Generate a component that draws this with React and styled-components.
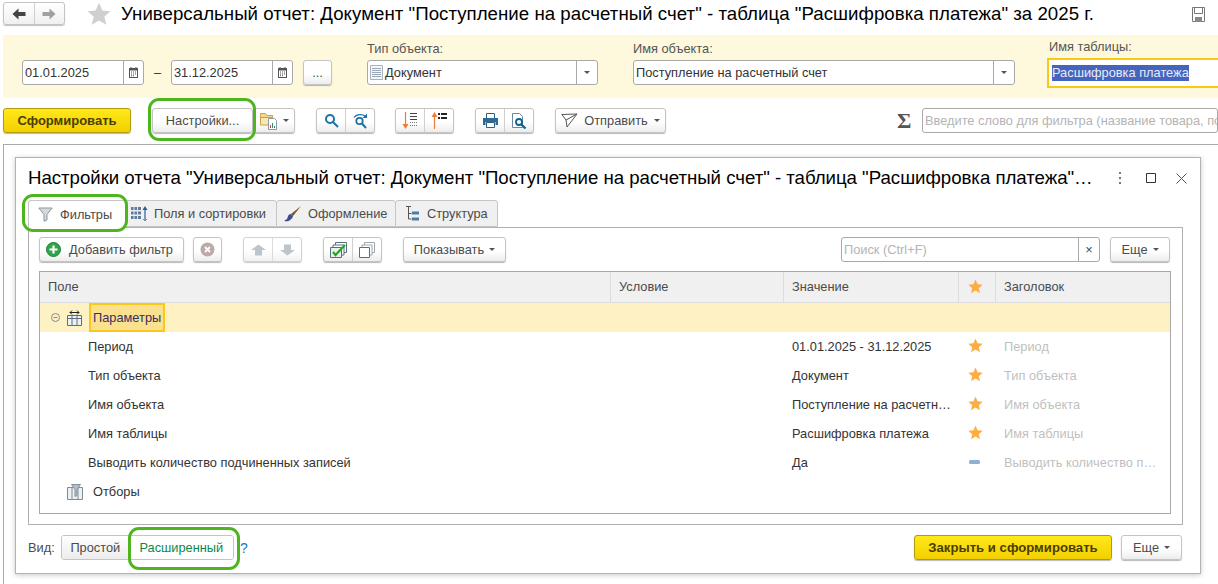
import React from "react";
import styled, { createGlobalStyle } from "styled-components";

const Global = createGlobalStyle`
  html, body { margin: 0; padding: 0; background: #fff; }
  body { font-family: "Liberation Sans", Arial, sans-serif; font-size: 12.8px; color: #4b4b4b; }
  * { box-sizing: border-box; }
`;

const Page = styled.div`
  position: relative; width: 1218px; height: 584px; overflow: hidden; background: #fff;
`;
const TitleBar = styled.header`
  display: flex; align-items: center; height: 35px; padding: 0 12px 7px 3px;
`;
const NavGroup = styled.div`
  display: flex; width: 62px; height: 23px; margin-bottom: 1px; border: 1px solid #c4c4c4; border-radius: 3px;
  background: linear-gradient(#fff, #f0f0f0); box-shadow: 0 1px 1px rgba(0,0,0,.25);
`;
const NavCell = styled.div`
  flex: 1; display: flex; align-items: center; justify-content: center;
  & + & { border-left: 1px solid #cfcfcf; }
`;
const PageTitle = styled.h1`
  flex: 1; margin: 0 0 0 10px; font-size: 18.67px; font-weight: 400; letter-spacing: .03px; color: #000; white-space: nowrap; line-height: 24px;
`;
const StarBox = styled.div` margin-left: 22px; width: 24px; height: 24px; display:flex; `;

const FilterPanel = styled.section`
  display: flex; align-items: flex-end; height: 63px; margin-left: 3px; padding: 0 0 13px 19px; background: #fef8dc;
`;
const Field = styled.div`
  display: flex; flex-direction: column; width: ${p => p.$w}px; margin-left: ${p => p.$ml || 0}px; flex: none;
`;
const FieldLabel = styled.label`
  height: 18px; margin-left: ${p => p.$ml || 0}px; font-size: 12.8px; line-height: 14px; color: #555;
`;
const InputBox = styled.div`
  display: flex; align-items: center; height: 25px; background: #fff; border: 1px solid #a9a9a9; border-radius: 3px; overflow: hidden;
  width: ${p => p.$w ? p.$w + "px" : "auto"}; flex: none; margin-left: ${p => p.$ml || 0}px;
`;
const InputText = styled.span`
  flex: 1; min-width: 0; padding-left: 2px; font-size: 12.8px; color: #333; white-space: nowrap; overflow: hidden;
  display: flex; align-items: center; gap: 2px;
`;
const Placeholder = styled(InputText)` color: #b4b4b4; `;
const Addon = styled.span`
  flex: none; width: ${p => p.$w || 20}px; height: 100%; border-left: 1px solid #a9a9a9; display: flex; align-items: center; justify-content: center;
`;
const Dash = styled.span` width: 27px; height: 25px; line-height: 25px; text-align: center; color: #333; font-size: 12.8px; flex: none; `;
const Focused = styled.div`
  display: flex; align-items: center; height: 30px; margin: 0 -3px -3px 0; padding-left: 3px; background: #fff; border: 2px solid #fbc815;
`;
const Selected = styled.span` background: #4464bd; color: #e9ecf7; font-size: 12.8px; line-height: 16px; white-space: nowrap; `;

const Btn = styled.button`
  display: inline-flex; align-items: center; justify-content: center; gap: ${p => p.$gap ?? 5}px; flex: none;
  width: ${p => p.$w}px; height: ${p => p.$h || 25}px; margin-left: ${p => p.$ml || 0}px; padding: 0 ${p => p.$pr || 0}px 0 0;
  font: 12.8px "Liberation Sans", Arial, sans-serif; color: #4b4b4b;
  background: linear-gradient(#fff, #fff 55%, #ededed); border: 1px solid #c4c4c4; border-radius: 3px;
  box-shadow: 0 1px 1px rgba(0,0,0,.28);
`;
const PrimaryBtn = styled(Btn)`
  font-weight: 700; font-size: ${p => p.$fs || 13}px; color: #4a3e00; border-color: #b39a12;
  background: linear-gradient(#ffe81a, #f3d000);
`;
const Group = styled.div`
  display: flex; flex: none; height: 25px; width: ${p => p.$w}px; margin-left: ${p => p.$ml || 0}px; border: 1px solid #c4c4c4; border-radius: 3px;
  background: linear-gradient(#fff, #fff 55%, #ededed); box-shadow: 0 1px 1px rgba(0,0,0,.28);
  opacity: ${p => p.$dim ? .75 : 1};
`;
const GroupCell = styled.div`
  flex: 1; display: flex; align-items: center; justify-content: center; gap: 5px;
  & + & { border-left: 1px solid #cfcfcf; }
`;
const Toolbar = styled.div`
  display: flex; align-items: center; height: 46px; margin-left: 3px; padding-bottom: 1px;
`;
const Sigma = styled.span`
  margin-left: auto; width: 25px; flex: none; font: 700 22px "Liberation Serif", serif; color: #555; line-height: 20px;
`;
const Frame = styled.main`
  margin-left: 3px; height: 441px; padding: 12px 0 0 11px; border-left: 1px solid #aaa; border-top: 1px solid #aaa;
`;
const Modal = styled.section`
  width: 1186px; height: 417px; padding: 0 18px 0 12px; background: #fff; border: 1px solid #b3b3b3; box-shadow: 0 1px 5px rgba(0,0,0,.22);
`;
const ModalHead = styled.div`
  display: flex; align-items: center; height: 42px; padding-bottom: 2px; margin-right: -15px;
`;
const ModalTitle = styled.h2`
  flex: 1; margin: 0; min-width: 0; font-size: 18.67px; font-weight: 400; letter-spacing: -.03px; color: #000; white-space: nowrap;
`;
const WinBtn = styled.span`
  width: 31px; flex: none; display: flex; align-items: center; justify-content: center;
`;
const TabRow = styled.div`
  display: flex; height: 27px; position: relative; z-index: 1;
`;
const Tab = styled.div`
  display: flex; align-items: center; gap: ${p => p.$gap || 8}px; height: ${p => p.$active ? 28 : 27}px; width: ${p => p.$w}px; padding-left: ${p => p.$pl || 8}px;
  background: ${p => p.$active ? "#fff" : "#f0f0f0"}; border: 1px solid #c6c6c6; border-bottom: ${p => p.$active ? "0" : "1px solid #c6c6c6"};
  border-radius: 3px 3px 0 0; font-size: 12.8px; color: #4b4b4b; margin-left: -1px; flex: none;
  &:first-child { margin-left: 0; }
`;
const TabPanel = styled.div`
  height: 298px; width: 1155px; padding: 9px 10px; border: 1px solid #b0b0b0;
`;
const PanelTools = styled.div` display: flex; align-items: center; height: 25px; padding-right: 2px; `;
const Table = styled.div`
  margin-top: 9px; width: 1132px; height: 243px; border: 1px solid #a8a8a8;
`;
const COLS = "570px 173px 175px 37px 1fr";
const HeadRow = styled.div`
  display: grid; grid-template-columns: ${COLS}; height: 31px; background: #f0f0f0; border-bottom: 1px solid #dcdcdc;
`;
const HeadCell = styled.div`
  display: flex; align-items: center; justify-content: ${p => p.$center ? "center" : "flex-start"};
  padding: ${p => p.$center ? "0 3px 2px 0" : "0 0 2px 8px"}; font-size: 12.8px; color: #4b4b4b;
  & + & { border-left: 1px solid #dcdcdc; }
`;
const Row = styled.div`
  display: grid; grid-template-columns: ${COLS}; height: 29px; align-items: center; font-size: 12.8px; color: #333;
  background: ${p => p.$hl ? "#fef1c3" : "transparent"};
`;
const TreeCell = styled.div`
  display: flex; align-items: center; height: 100%; padding-left: ${p => p.$indent || 0}px; white-space: nowrap;
`;
const Cell = styled.div`
  padding-left: ${p => p.$pl ?? 9}px; white-space: nowrap; color: ${p => p.$muted ? "#bfbfbf" : "#333"};
`;
const CenterCell = styled.div` display: flex; justify-content: center; padding: 0 3px 2px 0; `;
const Current = styled.span`
  display: flex; align-items: center; height: 29px; padding: 0 2px; margin-left: 7px; background: #fbe08f; border: 2px solid #f9c81b; color: #35305e;
`;
const CollapseGap = styled.span` width: 7px; flex: none; `;
const TreeLabel = styled.span` margin-left: 10px; color: #333; `;
const Foot = styled.footer` display: flex; align-items: center; height: 45px; `;
const FootLabel = styled.span` width: 33px; flex: none; font-size: 12.8px; color: #4b4b4b; `;
const Segment = styled.div`
  display: flex; flex: none; height: 25px; width: 173px; border: 1px solid #c4c4c4; border-radius: 3px; overflow: hidden;
`;
const SegItem = styled.div`
  display: flex; align-items: center; justify-content: center; width: ${p => p.$w}px; font-size: 12.8px;
  color: ${p => p.$active ? "#0a8a4a" : "#4b4b4b"};
  background: ${p => p.$active ? "#fff" : "linear-gradient(#fff, #ececec)"};
  border-left: ${p => p.$active ? "1px solid #c4c4c4" : 0};
`;
const Help = styled.span` margin-left: 6px; color: #1478c4; font-size: 14px; font-weight: 400; `;
const Spacer = styled.div` flex: 1; `;
const Caret = styled.span`
  display: inline-block; width: 0; height: 0; flex: none; border-left: 3px solid transparent; border-right: 3px solid transparent; border-top: 3px solid #555;
`;
const Ring = styled.div`
  position: absolute; left: ${p => p.$x}px; top: ${p => p.$y}px; width: ${p => p.$w}px; height: ${p => p.$h}px;
  border: 3px solid #4fb51f; border-radius: 11px; pointer-events: none; z-index: 5;
`;

const Star = ({ size = 15, color = "#fbae45" }) => (
  <svg width={size} height={size} viewBox="0 0 24 24"><path fill={color} d="M12 .8l3.3 7.6 8.2.8-6.2 5.4 1.9 8.1L12 18.4l-7.2 4.3 1.9-8.1L.5 9.2l8.2-.8z" /></svg>
);
const ArrowL = ({ c = "#444" }) => (
  <svg width="14" height="12" viewBox="0 0 14 12"><path fill={c} d="M6.500 0.500 L0.500 6 L6.500 11.500 V8 H13.500 V4 H6.500z" /></svg>
);
const ArrowR = ({ c = "#a0a0a0" }) => (
  <svg width="14" height="12" viewBox="0 0 14 12"><path fill={c} d="M7.500 0.500 L13.500 6 L7.500 11.500 V8 H0.500 V4 H7.500z" /></svg>
);
const Floppy = () => (
  <svg width="15" height="15" viewBox="0 0 15 15" fill="none" stroke="#777"><path d="M1.500 .5h12v14h-12z" /><path d="M3.500 .5v6h8v-6" /><path fill="#888" stroke="none" d="M4 10h7v5H4z" /></svg>
);
const Calendar = () => (
  <svg width="11" height="11" viewBox="0 0 11 11"><path fill="#555" d="M1 1h1.500V0h1v1h4V0h1v1H10v10H1z" /><path fill="#fff" d="M2 3.500h7V10H2z" /><path fill="#555" d="M3 4.500h1v1H3zM5 4.500h1v1H5zM7 4.500h1v1H7zM3 6.500h1v1H3zM5 6.500h1v1H5zM7 6.500h1v1H7zM3 8.200h1v1H3zM5 8.200h1v1H5z" /></svg>
);
const DocIcon = () => (
  <svg width="13" height="15" viewBox="0 0 13 15"><path fill="#f4f6f9" stroke="#a8b2be" d="M.5.500h12v14H.5z" /><path stroke="#9aa7b5" d="M2 3.500h9M2 5.500h9M2 7.500h9M2 9.500h9M2 11.500h9" /></svg>
);
const FolderChart = () => (
  <svg width="18" height="18" viewBox="0 0 18 18"><path fill="#f5d98a" stroke="#c9a24a" d="M.5 3.500V1.500h5l1 2h6v9H.5z" /><path fill="#fbe7b0" stroke="#c9a24a" d="M.5 5.500h12V13H.5z" /><path fill="#fff" stroke="#8e9aa6" d="M8.500 6.500h6l2 2v9h-8z" /><path fill="#c84a3a" d="M10 13h1v3h-1z" /><path fill="#3c8f4a" d="M12 11h1v5h-1z" /><path fill="#3a6ea5" d="M14 14h1v2h-1z" /></svg>
);
const Search = () => (
  <svg width="15" height="15" viewBox="0 0 15 15" fill="none" stroke="#1b72a8" strokeWidth="2"><circle cx="6" cy="6" r="4" /><path d="M9 9l5 5" /></svg>
);
const SearchRe = () => (
  <svg width="17" height="16" viewBox="0 0 17 16" fill="none" stroke="#1b72a8"><path strokeWidth="1.300" d="M2 4.500C4 1.500 10 .5 13 3" /><path fill="#1b72a8" stroke="none" d="M15 .5v4.500h-4.500z" /><circle strokeWidth="1.800" cx="7.500" cy="8" r="3.200" /><path strokeWidth="2" d="M10 10.500l4 4.500" /></svg>
);
const SortDown = () => (
  <svg width="17" height="17" viewBox="0 0 17 17"><path stroke="#ee7b35" strokeWidth="1.200" d="M3.500 0v14" /><path fill="#ee7b35" d="M.5 12h6l-3 5z" /><path stroke="#444" d="M8 1.500h7M8 4.500h7M8 7.500h7" /><path stroke="#777" strokeDasharray="1 1" d="M8 10.500h7M8 13.500h7" /></svg>
);
const SortUp = () => (
  <svg width="17" height="17" viewBox="0 0 17 17"><path stroke="#ee7b35" strokeWidth="1.200" d="M3.500 3v14" /><path fill="#ee7b35" d="M.5 5h6l-3-5z" /><path fill="#222" d="M7 1h2v2H7zM7 5h2v2H7z" /><path stroke="#222" d="M10 1.500h6M10 2.500h6M10 5.500h6M10 6.500h6" /></svg>
);
const Printer = () => (
  <svg width="15" height="15" viewBox="0 0 15 15"><path fill="#fff" stroke="#2a5f86" d="M3.500.5h8v5h-8z" /><path fill="#2a6a96" d="M0 5h15v7h-2.500V9h-10v3H0z" /><path fill="#fff" stroke="#2a5f86" d="M3.500 9.500h8v5h-8z" /></svg>
);
const PrintPreview = () => (
  <svg width="16" height="16" viewBox="0 0 16 16"><path fill="#fff" stroke="#6c8aa3" d="M1.500.5h7l3 3v11h-10z" /><circle cx="8" cy="9" r="3" fill="#fff" stroke="#12608f" strokeWidth="1.800" /><path stroke="#12608f" strokeWidth="2.200" d="M10 11l4.500 4.500" /></svg>
);
const PaperPlane = () => (
  <svg width="17" height="15" viewBox="0 0 17 15" fill="none" stroke="#555"><path d="M.800 1.500L16 1 6 14 5 7zM5 7L16 1" /></svg>
);
const Funnel = () => (
  <svg width="15" height="15" viewBox="0 0 15 15"><path fill="#d4d8dc" stroke="#8f979e" d="M.800 1h13.400L9 7.500V13L6 14.200V7.500z" /></svg>
);
const FieldsIcon = () => (
  <svg width="17" height="16" viewBox="0 0 17 16"><path fill="#5c7c99" d="M0 1h10v3H0zM0 5.500h10v3H0zM0 10h10v3H0z" /><path stroke="#dfe7ee" d="M3 1v12M6.500 1v12" /><path stroke="#27609a" strokeWidth="1.200" d="M14 2v12" /><path fill="#27609a" d="M11.500 4L14 0l2.500 4z" /><path fill="#888" d="M12 13h1v1h-1zM15 13h1v1h-1zM13 14h2v1h-2z" /></svg>
);
const Brush = () => (
  <svg width="18" height="16" viewBox="0 0 18 16"><path fill="#7a5428" d="M17 0L7 8l2 2z" /><path fill="#3e4d8c" d="M7 8c-3 0-3 3-4 5l-3 2c4 1 8-1 9-5z" /></svg>
);
const TreeIcon = () => (
  <svg width="14" height="15" viewBox="0 0 14 15"><path fill="none" stroke="#555" d="M3.500 1v12h3M3.500 7.500h3" /><path fill="none" stroke="#555" d="M1 .5h5" /><path fill="#4c7ea8" d="M7 5.500h7v3H7zM7 11.500h7v3H7z" /></svg>
);
const PlusCircle = () => (
  <svg width="15" height="15" viewBox="0 0 15 15"><circle cx="7.500" cy="7.500" r="7" fill="#2fa64a" stroke="#1e8137" /><path stroke="#fff" strokeWidth="2.200" d="M7.500 3.500v8M3.500 7.500h8" /></svg>
);
const XCircle = () => (
  <svg width="15" height="15" viewBox="0 0 15 15"><circle cx="7.500" cy="7.500" r="7" fill="#bda9a5" /><path stroke="#fff" strokeWidth="1.800" d="M5 5l5 5M10 5l-5 5" /></svg>
);
const ArrowUp = () => (
  <svg width="15" height="12" viewBox="0 0 15 12"><path fill="#a6b2ba" d="M7.500 .5L15 6h-4v5.500H4V6H0z" /></svg>
);
const ArrowDown = () => (
  <svg width="15" height="12" viewBox="0 0 15 12"><path fill="#a6b2ba" d="M7.500 11.500L15 6h-4V.5H4V6H0z" /></svg>
);
const CheckAll = () => (
  <svg width="17" height="16" viewBox="0 0 17 16" fill="#fff" stroke="#56707f"><path d="M5.500.5h11v10h-11z" /><path d="M3 3h11v10H3z" /><path fill="#e9f2e6" d="M.5 5.500h11v10H.5z" /><path fill="none" stroke="#29a02e" strokeWidth="2.200" d="M3 10l2.500 3L15 3" /></svg>
);
const UncheckAll = () => (
  <svg width="16" height="16" viewBox="0 0 16 16" fill="#fff" stroke="#56707f"><path stroke="#9aa7af" d="M5.500.5h10v10h-10z" /><path stroke="#9aa7af" d="M3 3h10v10H3z" /><path d="M.5 5.500h10v10H.5z" /></svg>
);
const Collapse = () => (
  <svg width="9" height="9" viewBox="0 0 9 9" fill="none" stroke="#8a8a8a"><circle cx="4.500" cy="4.500" r="4" /><path d="M2.500 4.500h4" /></svg>
);
const ParamsIcon = () => (
  <svg width="15" height="16" viewBox="0 0 15 16" fill="none" stroke="#5c6f80"><path fill="#eef1f4" d="M.5 5.500h14v10H.5z" /><path d="M5 5.500v10M10 5.500v10M.5 8.500h14" /><path stroke="#222" d="M3 2.500h9M3 2.500l2-2M3 2.500l2 2M12 2.500l-2-2M12 2.500l-2 2" /></svg>
);
const FiltersIcon = () => (
  <svg width="16" height="16" viewBox="0 0 16 16" fill="none" stroke="#7b8c9a"><path fill="#eef1f4" d="M.5 3.500h15v12H.5z" /><path d="M5 3.500v12M11 3.500v12" /><path fill="#b5bec6" stroke="#87929c" d="M4.500.5h9l-3.500 5v6l-2 1v-7z" /></svg>
);
const Dots = () => (
  <svg width="4" height="12" viewBox="0 0 4 12" fill="#777"><path d="M1 0h2v2H1zM1 5h2v2H1zM1 10h2v2H1z" /></svg>
);
const Maximize = () => (
  <svg width="10" height="10" viewBox="0 0 10 10" fill="none" stroke="#333"><path d="M.5.500h9v9h-9z" /></svg>
);
const CloseX = () => (
  <svg width="11" height="11" viewBox="0 0 11 11" fill="none" stroke="#555"><path d="M.5.500l10 10M10.500.5l-10 10" /></svg>
);
const Minus = () => (
  <svg width="14" height="14" viewBox="0 0 14 14"><rect x="1" y="5" width="11" height="4" rx="1.500" fill="#8fb0d6" /></svg>
);

const rows = [
  ["Период", "01.01.2025 - 31.12.2025", true, "Период"],
  ["Тип объекта", "Документ", true, "Тип объекта"],
  ["Имя объекта", "Поступление на расчетн…", true, "Имя объекта"],
  ["Имя таблицы", "Расшифровка платежа", true, "Имя таблицы"],
  ["Выводить количество подчиненных записей", "Да", false, "Выводить количество п…"],
];

export default function App() {
  return (
    <Page>
      <Global />
      <TitleBar>
        <NavGroup>
          <NavCell><ArrowL /></NavCell>
          <NavCell><ArrowR /></NavCell>
        </NavGroup>
        <StarBox><Star size={24} color="#cfcfcf" /></StarBox>
        <PageTitle>Универсальный отчет: Документ "Поступление на расчетный счет" - таблица "Расшифровка платежа" за 2025 г.</PageTitle>
        <Floppy />
      </TitleBar>

      <FilterPanel>
        <InputBox $w={122}><InputText>01.01.2025</InputText><Addon><Calendar /></Addon></InputBox>
        <Dash>–</Dash>
        <InputBox $w={122}><InputText>31.12.2025</InputText><Addon><Calendar /></Addon></InputBox>
        <Btn $w={29} $ml={10}>...</Btn>
        <Field $w={231} $ml={35}>
          <FieldLabel>Тип объекта:</FieldLabel>
          <InputBox><InputText><DocIcon />Документ</InputText><Addon $w={21}><Caret /></Addon></InputBox>
        </Field>
        <Field $w={382} $ml={35}>
          <FieldLabel>Имя объекта:</FieldLabel>
          <InputBox><InputText>Поступление на расчетный счет</InputText><Addon $w={21}><Caret /></Addon></InputBox>
        </Field>
        <Field $w={171} $ml={32}>
          <FieldLabel $ml={2}>Имя таблицы:</FieldLabel>
          <Focused><Selected>Расшифровка платежа</Selected></Focused>
        </Field>
      </FilterPanel>

      <Toolbar>
        <PrimaryBtn $w={128}>Сформировать</PrimaryBtn>
        <Btn $w={101} $ml={21}>Настройки...</Btn>
        <Btn $w={42} $gap={5}><FolderChart /><Caret /></Btn>
        <Group $w={59} $ml={21}><GroupCell><Search /></GroupCell><GroupCell><SearchRe /></GroupCell></Group>
        <Group $w={59} $ml={20}><GroupCell><SortDown /></GroupCell><GroupCell><SortUp /></GroupCell></Group>
        <Group $w={59} $ml={21}><GroupCell><Printer /></GroupCell><GroupCell><PrintPreview /></GroupCell></Group>
        <Btn $w={111} $ml={21} $gap={6}><PaperPlane />Отправить<Caret /></Btn>
        <Sigma>Σ</Sigma>
        <InputBox $w={296}><Placeholder>Введите слово для фильтра (название товара, по</Placeholder></InputBox>
      </Toolbar>

      <Frame>
        <Modal>
          <ModalHead>
            <ModalTitle>Настройки отчета "Универсальный отчет: Документ "Поступление на расчетный счет" - таблица "Расшифровка платежа"…</ModalTitle>
            <WinBtn><Dots /></WinBtn>
            <WinBtn><Maximize /></WinBtn>
            <WinBtn><CloseX /></WinBtn>
          </ModalHead>
          <TabRow>
            <Tab $active $w={98} $pl={9} $gap={7}><Funnel />Фильтры</Tab>
            <Tab $w={152} $pl={5} $gap={6}><FieldsIcon />Поля и сортировки</Tab>
            <Tab $w={120} $pl={7} $gap={6}><Brush />Оформление</Tab>
            <Tab $w={103} $pl={9}><TreeIcon />Структура</Tab>
          </TabRow>
          <TabPanel>
            <PanelTools>
              <Btn $w={145} $gap={8} $pr={4}><PlusCircle />Добавить фильтр</Btn>
              <Btn $w={29} $ml={9}><XCircle /></Btn>
              <Group $w={59} $ml={21} $dim><GroupCell><ArrowUp /></GroupCell><GroupCell><ArrowDown /></GroupCell></Group>
              <Group $w={59} $ml={21}><GroupCell><CheckAll /></GroupCell><GroupCell><UncheckAll /></GroupCell></Group>
              <Btn $w={103} $ml={21}>Показывать<Caret /></Btn>
              <Spacer />
              <InputBox $w={259}><Placeholder>Поиск (Ctrl+F)</Placeholder><Addon $w={21}>×</Addon></InputBox>
              <Btn $w={60} $ml={10}>Еще<Caret /></Btn>
            </PanelTools>
            <Table>
              <HeadRow>
                <HeadCell>Поле</HeadCell>
                <HeadCell>Условие</HeadCell>
                <HeadCell>Значение</HeadCell>
                <HeadCell $center><Star /></HeadCell>
                <HeadCell>Заголовок</HeadCell>
              </HeadRow>
              <Row $hl>
                <TreeCell $indent={11}>
                  <Collapse />
                  <CollapseGap />
                  <ParamsIcon />
                  <Current>Параметры</Current>
                </TreeCell>
              </Row>
              {rows.map(r => (
                <Row key={r[0]}>
                  <Cell $pl={48}>{r[0]}</Cell>
                  <span />
                  <Cell>{r[1]}</Cell>
                  <CenterCell>{r[2] ? <Star /> : <Minus />}</CenterCell>
                  <Cell $muted>{r[3]}</Cell>
                </Row>
              ))}
              <Row>
                <TreeCell $indent={27}><FiltersIcon /><TreeLabel>Отборы</TreeLabel></TreeCell>
              </Row>
            </Table>
          </TabPanel>
          <Foot>
            <FootLabel>Вид:</FootLabel>
            <Segment>
              <SegItem $w={67}>Простой</SegItem>
              <SegItem $active $w={105}>Расширенный</SegItem>
            </Segment>
            <Help>?</Help>
            <Spacer />
            <PrimaryBtn $w={198} $fs={13.15}>Закрыть и сформировать</PrimaryBtn>
            <Btn $w={61} $ml={9}>Еще<Caret /></Btn>
          </Foot>
        </Modal>
      </Frame>

      <Ring $x={148} $y={98} $w={108} $h={43} />
      <Ring $x={22} $y={194} $w={106} $h={38} />
      <Ring $x={128} $y={527} $w={112} $h={43} />
    </Page>
  );
}
